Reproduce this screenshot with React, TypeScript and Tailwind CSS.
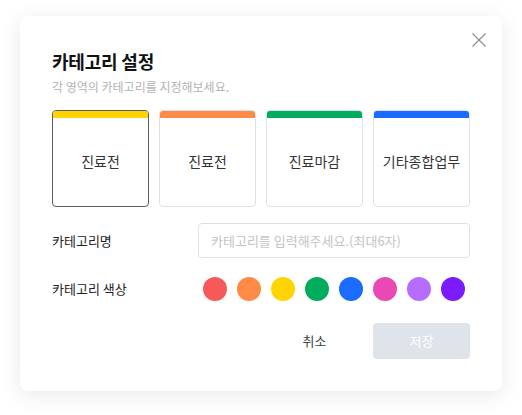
import React from "react";

const cats = [
  { name: "진료전", color: "bg-[#ffd400]", selected: true },
  { name: "진료전", color: "bg-[#ff8a45]", selected: false },
  { name: "진료마감", color: "bg-[#00ad5c]", selected: false },
  { name: "기타종합업무", color: "bg-[#1a6bff]", selected: false },
];

const colors = [
  "bg-[#f7585a]",
  "bg-[#ff8a45]",
  "bg-[#ffd400]",
  "bg-[#00ad5c]",
  "bg-[#1a6bff]",
  "bg-[#ea48b5]",
  "bg-[#b66cff]",
  "bg-[#7b1bff]",
];

export default function App() {
  return (
    <div
      className="w-[522px] h-[415px] bg-white pt-[16px] pl-[20px]"
      style={{ fontFamily: '"Noto Sans CJK KR", "Noto Sans", sans-serif' }}
    >
      <div className="relative w-[482px] h-[375px] bg-white rounded-[8px] shadow-[0_4px_22px_rgba(0,0,0,0.09)] px-[32px] pt-[32px]">
        <button className="absolute right-[16px] top-[17px] w-[14px] h-[14px] text-[#8a8a8a]">
          <svg width="14" height="14" viewBox="0 0 14 14" fill="none" stroke="currentColor" strokeWidth="1.1">
            <path d="M0.5 0.5 L13.5 13.5 M13.5 0.5 L0.5 13.5" />
          </svg>
        </button>
        <h1 className="text-[18px] leading-[26px] font-bold text-[#111] tracking-[-0.2px]">카테고리 설정</h1>
        <p className="mt-[4px] text-[12px] leading-[18px] text-[#b3b3b3]">각 영역의 카테고리를 지정해보세요.</p>
        <div className="mt-[14px] flex gap-[10px]">
          {cats.map((c, i) => (
            <div
              key={i}
              className={`w-[97px] h-[97px] rounded-[4px] overflow-hidden flex flex-col border ${
                c.selected ? "border-[#5a5d66]" : "border-[#dde1e7]"
              }`}
            >
              <div className={`h-[7px] ${c.color}`} />
              <div className="flex-1 flex items-center justify-center text-[14px] text-[#333] pb-[2px]">{c.name}</div>
            </div>
          ))}
        </div>
        <div className="mt-[16px] flex items-center">
          <div className="w-[146px] text-[13px] text-[#222]">카테고리명</div>
          <div className="w-[272px] h-[35px] border border-[#dde1e7] rounded-[4px] flex items-center px-[12px] text-[13px] text-[#c4c4c4]">
            카테고리를 입력해주세요.(최대6자)
          </div>
        </div>
        <div className="mt-[19px] flex items-center">
          <div className="w-[151px] text-[13px] text-[#222]">카테고리 색상</div>
          <div className="flex gap-[10px]">
            {colors.map((c, i) => (
              <div key={i} className={`w-[24px] h-[24px] rounded-full ${c}`} />
            ))}
          </div>
        </div>
        <div className="mt-[22px] flex justify-end gap-[10px]">
          <button className="w-[97px] h-[36px] text-[13px] text-[#444] rounded-[4px]">취소</button>
          <button className="w-[97px] h-[36px] text-[13px] text-white bg-[#dfe3ea] rounded-[4px]">저장</button>
        </div>
      </div>
    </div>
  );
}
